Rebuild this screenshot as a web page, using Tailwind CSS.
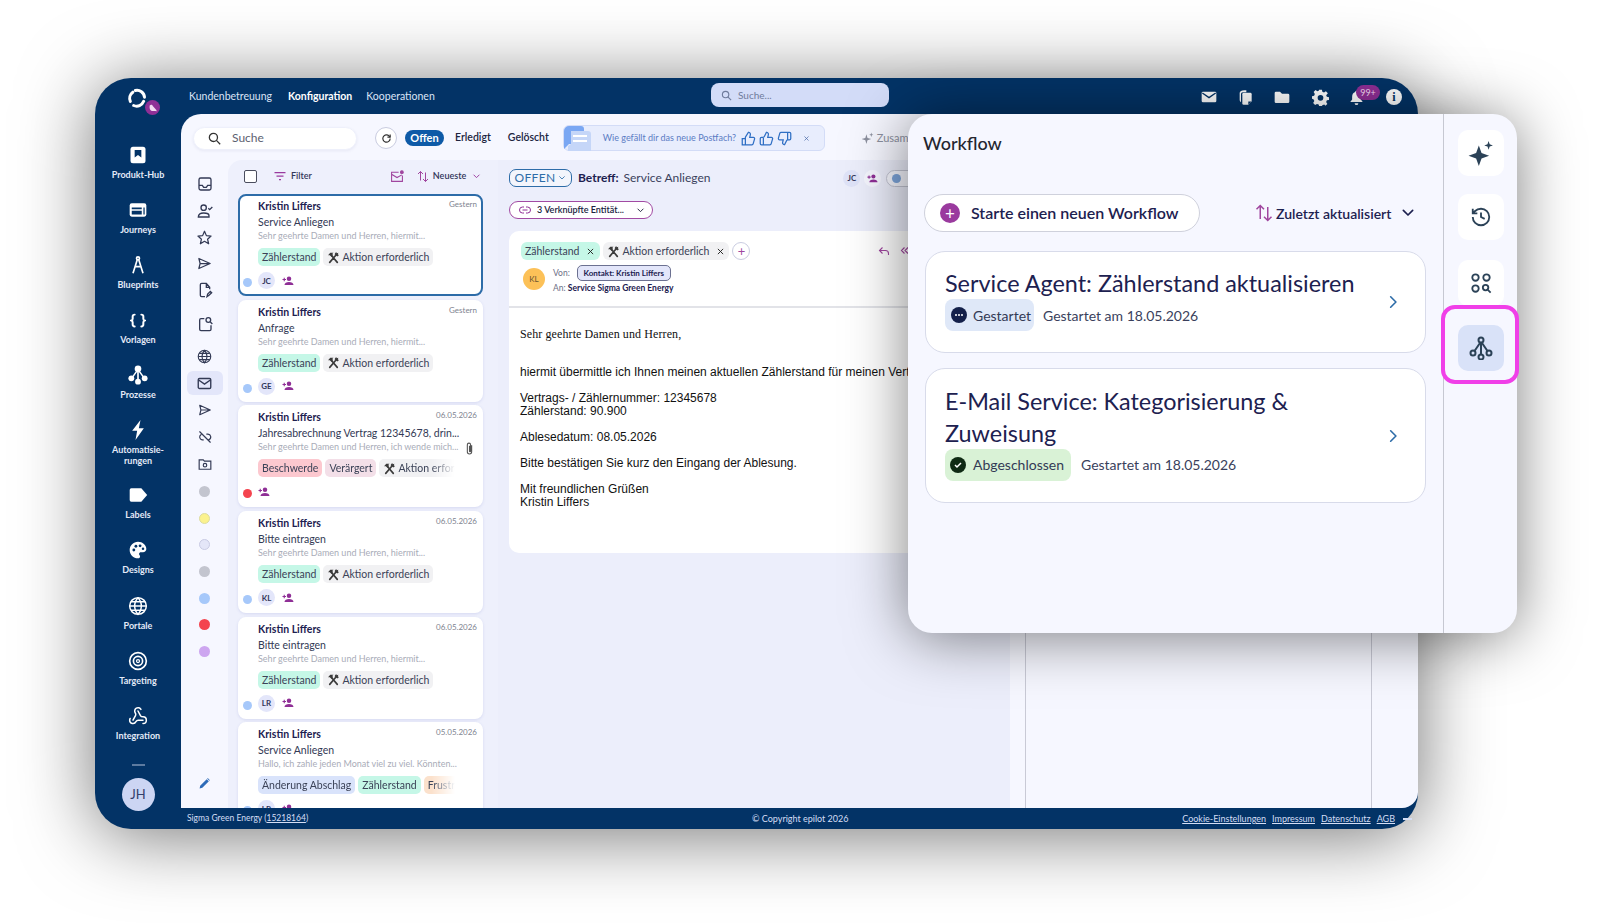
<!DOCTYPE html>
<html lang="de">
<head>
  <meta charset="UTF-8">
  <meta name="viewport" content="width=device-width, initial-scale=1.0">
  <title>Postfach Workflow</title>
  <script src="https://cdn.jsdelivr.net/npm/@tailwindcss/browser@4"></script>
</head>
<body class="h-[923px] w-[1600px] bg-white font-['Lato','Liberation_Sans',sans-serif]">
  <svg class="hidden">
    <defs>
      <symbol id="tools" viewBox="0 0 24 24"><path d="M5 21 17 7M19 21 7 7" fill="none" stroke="currentColor" stroke-width="3" stroke-linecap="round"/><path d="M2 8 6 3h6l-2 2 1 3-3 3-2-3zM15 4l2-2 1 2 3-1-1 3 2 2-3 2-5-4z" fill="currentColor"/></symbol>
      <symbol id="person-add" viewBox="0 0 24 24"><circle cx="14" cy="7.500" r="4.500" fill="currentColor"/><path d="M5 20c0-4 4-6 9-6s9 2 9 6z" fill="currentColor"/><path d="M1 9h7M4.500 5.500v7" stroke="currentColor" stroke-width="2.200"/></symbol>
      <symbol id="close" viewBox="0 0 24 24"><path d="M5 5l14 14M19 5 5 19" fill="none" stroke="currentColor" stroke-width="2.500"/></symbol>
      <symbol id="chev-down" viewBox="0 0 24 24"><path d="M5 8l7 7 7-7" fill="none" stroke="currentColor" stroke-width="2.500" stroke-linecap="round" stroke-linejoin="round"/></symbol>
      <symbol id="chev-right" viewBox="0 0 24 24"><path d="M8 3l9 9-9 9" fill="none" stroke="currentColor" stroke-width="2.800" stroke-linecap="round" stroke-linejoin="round"/></symbol>
      <symbol id="sort" viewBox="0 0 24 24"><path d="M8 21V3M3 8l5-5 5 5" fill="none" stroke="currentColor" stroke-width="2" transform="translate(-1 -1)"/><path d="M16 3v18M11 16l5 5 5-5" fill="none" stroke="currentColor" stroke-width="2" transform="translate(1 1)"/></symbol>
      <symbol id="globe" viewBox="0 0 24 24"><g fill="none" stroke="currentColor" stroke-width="1.800"><circle cx="12" cy="12" r="10"/><path d="M12 2a14.500 14.500 0 0 0 0 20 14.500 14.500 0 0 0 0-20M2 12h20M3.500 7h17M3.500 17h17"/></g></symbol>
      <symbol id="send" viewBox="0 0 24 24"><path d="M3 4l18 8-18 8 2-8zM5 12h16" fill="none" stroke="currentColor" stroke-width="2" stroke-linejoin="round"/></symbol>
      <symbol id="tree" viewBox="0 0 24 24"><g fill="none" stroke="currentColor" stroke-width="2"><circle cx="12" cy="4" r="2.500"/><circle cx="4" cy="17" r="2.500"/><circle cx="12" cy="21" r="2.500"/><circle cx="20" cy="17" r="2.500"/><path d="M12 6.500v12M11 7l-5.500 8M13 7l5.500 8"/></g></symbol>
    </defs>
  </svg>

  <div class="pl-[95px] pt-[78px]">
    <div class="relative flex h-[751px] w-[1323px] rounded-[36px] bg-[#033366] shadow-[0_6px_75px_rgba(0,0,0,0.55)]">

      <!-- sidebar -->
      <aside class="flex w-[86px] flex-col items-center text-[#e4eaf8]">
        <div class="relative h-[67px] w-full">
          <svg class="absolute left-[32px] top-[10px] h-[20px] w-[20px]" viewBox="0 0 24 24" fill="none" stroke="white" stroke-width="3.600" stroke-linecap="round"><path d="M4 16a9 9 0 0 1 3-11"/><path d="M10 3a9 9 0 0 1 11 8"/><path d="M20 16a9 9 0 0 1-12 5"/></svg>
          <div class="absolute left-[50px] top-[22px] flex h-[15px] w-[15px] items-center justify-center rounded-full bg-[#8f2f96]">
            <svg class="h-[10px] w-[10px]" viewBox="0 0 24 24" fill="#f3d9f2"><path d="M4 6c3-3 7-2 8 2l8 9 1 3-4-1H9c-4-1-6-6-5-13z"/></svg>
          </div>
        </div>
        <div class="flex h-[55px] flex-col items-center">
          <svg class="h-[20px] w-[20px]" viewBox="0 0 24 24"><rect x="3" y="2" width="18" height="20" rx="3" fill="white"/><path d="M8 6h8v9l-4-3-4 3z" fill="#033366"/></svg>
          <span class="mt-[4px] text-[9px] font-bold leading-[11px]">Produkt-Hub</span>
        </div>
        <div class="flex h-[55px] flex-col items-center">
          <svg class="h-[20px] w-[20px]" viewBox="0 0 24 24"><rect x="2" y="4" width="20" height="16" rx="2.500" fill="white"/><path d="M4.500 9h12v2h-12zM4.500 13h12v4.500h-12zM18.500 9h1.500v8.500h-1.500z" fill="#033366"/></svg>
          <span class="mt-[4px] text-[9px] font-bold leading-[11px]">Journeys</span>
        </div>
        <div class="flex h-[55px] flex-col items-center">
          <svg class="h-[20px] w-[20px]" viewBox="0 0 24 24" fill="none" stroke="white" stroke-width="2"><circle cx="12" cy="4" r="1.800"/><path d="M11 6 6 22M13 6l5 16M8 14h8"/></svg>
          <span class="mt-[4px] text-[9px] font-bold leading-[11px]">Blueprints</span>
        </div>
        <div class="flex h-[55px] flex-col items-center">
          <svg class="my-[2.500px] h-[15px] w-[16px]" viewBox="0 0 24 24" fill="none" stroke="white" stroke-width="3" stroke-linecap="round" preserveAspectRatio="none"><path d="M7 2.500c-2.500 0-3 1-3 3v3.500c0 1.500-.5 2.500-2 3 1.500.5 2 1.500 2 3v3.500c0 2 .5 3 3 3M17 2.500c2.500 0 3 1 3 3v3.500c0 1.500.5 2.500 2 3-1.500.5-2 1.500-2 3v3.500c0 2-.5 3-3 3"/></svg>
          <span class="mt-[4px] text-[9px] font-bold leading-[11px]">Vorlagen</span>
        </div>
        <div class="flex h-[55px] flex-col items-center">
          <svg class="h-[20px] w-[20px]" viewBox="0 0 24 24" fill="white"><circle cx="12" cy="4.500" r="4"/><circle cx="4" cy="16" r="3.500"/><circle cx="12" cy="20" r="3.500"/><circle cx="20" cy="16" r="3.500"/><path d="M11 6h2v12h-2zM10.500 6l1.500 1-6.500 9-1.500-1zM13.500 6l-1.500 1 6.500 9 1.500-1z"/></svg>
          <span class="mt-[4px] text-[9px] font-bold leading-[11px]">Prozesse</span>
        </div>
        <div class="flex h-[65px] flex-col items-center">
          <svg class="h-[20px] w-[20px]" viewBox="0 0 24 24" fill="white"><path d="M15 0 5 13h6l-2 11 10-14h-6z"/></svg>
          <span class="mt-[4px] text-center text-[9px] font-bold leading-[11px]">Automatisie-<br>rungen</span>
        </div>
        <div class="flex h-[55px] flex-col items-center">
          <svg class="h-[20px] w-[20px]" viewBox="0 0 24 24" fill="white"><path d="M2 6a2 2 0 0 1 2-2h12l7 8-7 8H4a2 2 0 0 1-2-2z"/></svg>
          <span class="mt-[4px] text-[9px] font-bold leading-[11px]">Labels</span>
        </div>
        <div class="flex h-[56px] flex-col items-center">
          <svg class="h-[20px] w-[20px]" viewBox="0 0 24 24"><path d="M12 2C6.500 2 2 6.500 2 12s4.500 10 10 10c1.700 0 2.500-1.200 2.500-2.300 0-.6-.3-1.100-.6-1.500-.3-.4-.6-.8-.6-1.400 0-1.200 1-2 2.200-2H18c2.200 0 4-1.800 4-4 0-4.900-4.500-8.800-10-8.800z" fill="white"/><g fill="#033366"><circle cx="7" cy="12" r="1.700"/><circle cx="9.500" cy="7.500" r="1.700"/><circle cx="14.500" cy="7" r="1.700"/><circle cx="18" cy="10.500" r="1.500"/></g></svg>
          <span class="mt-[4px] text-[9px] font-bold leading-[11px]">Designs</span>
        </div>
        <div class="flex h-[55px] flex-col items-center text-white">
          <svg class="h-[20px] w-[20px]"><use href="#globe"/></svg>
          <span class="mt-[4px] text-[9px] font-bold leading-[11px] text-[#e4eaf8]">Portale</span>
        </div>
        <div class="flex h-[55px] flex-col items-center">
          <svg class="h-[20px] w-[20px]" viewBox="0 0 24 24" fill="none" stroke="white"><circle cx="12" cy="12" r="10" stroke-width="2"/><circle cx="12" cy="12" r="5.500" stroke-width="2"/><circle cx="12" cy="12" r="1.800" stroke-width="1.500"/></svg>
          <span class="mt-[4px] text-[9px] font-bold leading-[11px]">Targeting</span>
        </div>
        <div class="flex h-[58px] flex-col items-center">
          <svg class="h-[20px] w-[20px]" viewBox="0 0 24 24" fill="none" stroke="white" stroke-width="1.800" stroke-linecap="round"><path d="M18 16.980h-5.990c-1.100 0-1.950.94-2.480 1.900A4 4 0 0 1 2 17c.01-.7.2-1.400.57-2"/><path d="m6 17 3.130-5.780c.53-.97.1-2.180-.5-3.100a4 4 0 1 1 6.890-4.060"/><path d="m12 6 3.130 5.730C15.660 12.700 16.900 13 18 13a4 4 0 0 1 0 8"/></svg>
          <span class="mt-[4px] text-[9px] font-bold leading-[11px]">Integration</span>
        </div>
        <div class="h-[2px] w-[13px] bg-[#5d7ba0]"></div>
        <div class="mt-[12px] flex h-[33px] w-[33px] items-center justify-center rounded-full bg-[#ccd5f3] text-[13px] text-[#33406b]">JH</div>
      </aside>

      <div class="flex min-w-0 flex-1 flex-col">
        <!-- top bar -->
        <header class="relative flex h-[36px] items-center pl-[8px] pt-[2px] text-[10.500px] text-[#dbe4f6]">
          <span>Kundenbetreuung</span>
          <span class="ml-[16px] font-bold text-white">Konfiguration</span>
          <span class="ml-[14px]">Kooperationen</span>
          <div class="absolute left-[530px] top-[5px] flex h-[24px] w-[178px] items-center rounded-[8px] bg-[#d3dcf8] pl-[10px] text-[#6f7b9c]">
            <svg class="h-[11px] w-[11px]" viewBox="0 0 24 24" fill="none" stroke="currentColor" stroke-width="2.500"><circle cx="10" cy="10" r="7"/><path d="m15 15 7 7"/></svg>
            <span class="ml-[6px] text-[10px]">Suche...</span>
          </div>
          <div class="ml-auto flex items-center pr-[16px] text-white">
            <svg class="h-[16px] w-[16px]" viewBox="0 0 24 24"><rect x="1" y="4" width="22" height="16" rx="2" fill="white"/><path d="m2 6 10 7 10-7" fill="none" stroke="#033366" stroke-width="2"/></svg>
            <svg class="ml-[20px] h-[17px] w-[16px]" viewBox="0 0 24 24"><path d="M4 5c0-2 3-4 7-4h3v3H9c-2 0-3 1-3 3v12C4 18 4 16 4 15z" fill="white"/><path d="M8 7a2 2 0 0 1 2-2h10a2 2 0 0 1 2 2v11l-5 5h-7a2 2 0 0 1-2-2z" fill="white"/><path d="M22 18h-5v5" fill="#033366"/></svg>
            <svg class="ml-[21px] h-[16px] w-[16px]" viewBox="0 0 24 24" fill="white"><path d="M1 6a2 2 0 0 1 2-2h6l3 3h9a2 2 0 0 1 2 2v10a2 2 0 0 1-2 2H3a2 2 0 0 1-2-2z"/></svg>
            <svg class="ml-[22px] h-[17px] w-[17px]" viewBox="0 0 24 24"><path d="M10 1h4l.6 3 2.400 1 2.600-1.700 2.800 2.800L20 8.700 21 11l3 .6v3.800L21 16l-1 2.400 1.700 2.600-2.800 2.800L17.300 22l-2.700 1-.6 1h-4l-.6-2L7 21l-2.600 1.700-2.800-2.800L3.300 17 2 14.500l-2-.6v-3.800l3-.6L4 7 2.300 4.300 5 1.500 7.600 3.300 9.500 2.500z" fill="white"/><circle cx="12" cy="12.500" r="4" fill="#033366"/></svg>
            <div class="relative ml-[20px] h-[17px] w-[17px]">
              <svg class="h-[17px] w-[15px]" viewBox="0 0 24 24" fill="white"><path d="M12 1a2 2 0 0 1 2 2c3.500 1 5 4 5 8v4l3 4H2l3-4v-4c0-4 1.500-7 5-8a2 2 0 0 1 2-2zM9 21h6a3 3 0 0 1-6 0z"/></svg>
              <span class="absolute left-[7px] top-[-4px] flex h-[15px] w-[24px] items-center justify-center rounded-full bg-[#8f2f96] text-[9px] leading-none text-[#f5d9f4]">99+</span>
            </div>
            <div class="ml-[20px] flex h-[16px] w-[16px] items-center justify-center rounded-full bg-white font-['Liberation_Serif',serif] text-[12px] font-bold leading-none text-[#033366]">i</div>
          </div>
        </header>

        <!-- content -->
        <main class="flex min-h-0 flex-1 flex-col overflow-hidden rounded-tl-[20px] rounded-br-[16px] bg-[#f6f7ff]">
          <div class="flex h-[46px] shrink-0 items-center pl-[12px] pt-[2px] text-[10.500px] text-[#1d2150]">
            <div class="flex h-[23px] w-[164px] items-center rounded-full border border-[#eef0fb] bg-white pl-[14px] shadow-[0_1px_3px_rgba(60,70,130,0.08)]">
              <svg class="h-[13px] w-[13px] text-[#333]" viewBox="0 0 24 24" fill="none" stroke="currentColor" stroke-width="2.400"><circle cx="10" cy="10" r="7.500"/><path d="m15.500 15.500 7 7"/></svg>
              <span class="ml-[11px] text-[12px] text-[#5c6070]">Suche</span>
            </div>
            <div class="ml-[18px] flex h-[22px] w-[22px] items-center justify-center rounded-full border border-[#c9cce0] bg-white">
              <svg class="h-[11px] w-[11px] text-[#333]" viewBox="0 0 24 24" fill="none" stroke="currentColor" stroke-width="2.600"><path d="M20 12a8 8 0 1 1-2.500-5.800L20 9"/><path d="M20 3v6h-6"/></svg>
            </div>
            <span class="ml-[8px] flex h-[16px] w-[39px] items-center justify-center rounded-full bg-[#0e5aa7] text-[11px] font-bold text-white">Offen</span>
            <span class="ml-[11px] font-semibold text-[#20243f]">Erledigt</span>
            <span class="ml-[17px] font-semibold text-[#20243f]">Gelöscht</span>
            <div class="relative ml-[14px] flex h-[26px] w-[262px] items-center rounded-[6px] border border-[#d3dcf7] bg-[#e8edfd] pl-[39px] text-[9px] text-[#5b7cc4]">
              <svg class="absolute left-0 top-0 h-[25px] w-[27px]" viewBox="0 0 27 25"><path d="M5 0h12a3 3 0 0 1 3 3v15H5l-5 5V5a5 5 0 0 1 5-5z" fill="#7aa7f3"/><path d="M7 5h17a3 3 0 0 1 3 3v17H4V20l3-2z" fill="#c5d6f8"/><path d="M9 10h14M9 15h14" stroke="white" stroke-width="2"/></svg>
              <span>Wie gefällt dir das neue Postfach?</span>
              <div class="ml-[5px] flex items-center gap-[3px] text-[#2f6fc4]">
                <svg class="h-[15px] w-[15px]" viewBox="0 0 24 24" fill="none" stroke="currentColor" stroke-width="2"><path d="M7 10v12M2 12h5v10H2zM15 5.880 14 10h5.830a2 2 0 0 1 1.920 2.560l-2.330 8A2 2 0 0 1 17.500 22H7V10l5-8a3.130 3.130 0 0 1 3 3.880Z"/></svg>
                <svg class="h-[15px] w-[15px]" viewBox="0 0 24 24" fill="none" stroke="currentColor" stroke-width="2"><path d="M7 10v12M15 5.880 14 10h5.830a2 2 0 0 1 1.920 2.560l-2.330 8A2 2 0 0 1 17.500 22H4a2 2 0 0 1-2-2v-8a2 2 0 0 1 2-2h2.760a2 2 0 0 0 1.790-1.110L12 2a3.130 3.130 0 0 1 3 3.880Z"/></svg>
                <svg class="h-[15px] w-[15px]" viewBox="0 0 24 24" fill="none" stroke="currentColor" stroke-width="2"><path d="M17 14V2M9 18.120 10 14H4.170a2 2 0 0 1-1.920-2.560l2.330-8A2 2 0 0 1 6.500 2H20a2 2 0 0 1 2 2v8a2 2 0 0 1-2 2h-2.760a2 2 0 0 0-1.790 1.110L12 22a3.130 3.130 0 0 1-3-3.880Z"/></svg>
              </div>
              <svg class="ml-[11px] h-[7px] w-[7px] text-[#4a6aa8]"><use href="#close"/></svg>
            </div>
            <svg class="ml-[36px] h-[13px] w-[13px] text-[#8b8f9e]" viewBox="0 0 24 24" fill="currentColor"><path d="M10 4l2 7 7 2-7 2-2 7-2-7-7-2 7-2zM19 1l1 3 3 1-3 1-1 3-1-3-3-1 3-1z"/></svg>
            <span class="ml-[3px] text-[11px] text-[#8b8f9e]">Zusam</span>
          </div>

          <div class="flex min-h-0 flex-1">
            <!-- nav column -->
            <nav class="flex w-[47px] shrink-0 flex-col items-center pt-[16px] text-[#333a55]">
              <svg class="h-[16px] w-[16px]" viewBox="0 0 24 24" fill="none" stroke="currentColor" stroke-width="2"><rect x="3" y="3" width="18" height="18" rx="2.500"/><path d="M3 14h5l2 3h4l2-3h5"/></svg>
              <svg class="mt-[11px] h-[16px] w-[16px]" viewBox="0 0 24 24" fill="none" stroke="currentColor" stroke-width="2"><circle cx="10" cy="7" r="4"/><path d="M2 21c0-4 4-6 8-6s8 1 8 4v2zM17 8l2 2 4-4"/></svg>
              <svg class="mt-[11px] h-[15px] w-[15px]" viewBox="0 0 24 24" fill="none" stroke="currentColor" stroke-width="2" stroke-linejoin="round"><path d="m12 2 3 7 7.500.7-5.600 5 1.700 7.300-6.600-3.900L5.400 22l1.700-7.300-5.600-5L9 9z"/></svg>
              <svg class="mt-[11px] h-[15px] w-[15px]"><use href="#send"/></svg>
              <svg class="mt-[11px] h-[16px] w-[16px]" viewBox="0 0 24 24" fill="none" stroke="currentColor" stroke-width="2"><path d="M19 11V8l-5-6H7a2 2 0 0 0-2 2v16a2 2 0 0 0 2 2h5M14 2v6h5M15 22l1-4 4-4 2 2-4 4z"/></svg>
              <svg class="mt-[18px] h-[16px] w-[16px]" viewBox="0 0 24 24" fill="none" stroke="currentColor" stroke-width="2"><path d="M11 4H6a2 2 0 0 0-2 2v14a2 2 0 0 0 2 2h13a2 2 0 0 0 2-2v-6"/><circle cx="17" cy="6" r="3.500"/><path d="m20 9 3 3"/></svg>
              <svg class="mt-[17px] h-[15px] w-[15px]"><use href="#globe"/></svg>
              <div class="mt-[7px] flex h-[24px] w-[36px] shrink-0 items-center justify-center rounded-[6px] bg-[#e3e6fa]">
                <svg class="h-[15px] w-[15px]" viewBox="0 0 24 24" fill="none" stroke="currentColor" stroke-width="2.200"><rect x="2" y="4" width="20" height="16" rx="2"/><path d="m2 6 10 7 10-7"/></svg>
              </div>
              <svg class="mt-[8px] h-[14px] w-[14px]"><use href="#send"/></svg>
              <svg class="mt-[13px] h-[14px] w-[14px]" viewBox="0 0 24 24" fill="none" stroke="currentColor" stroke-width="2" stroke-linecap="round"><path d="M9 17H7A5 5 0 0 1 5 8M15 7h2a5 5 0 0 1 2 9.500M3 3l18 18"/></svg>
              <svg class="mt-[13px] h-[14px] w-[14px]" viewBox="0 0 24 24" fill="none" stroke="currentColor" stroke-width="2"><path d="M2 5h7l2 2h11v14H2z"/><circle cx="12" cy="14" r="3"/></svg>
              <span class="mt-[15px] h-[11px] w-[11px] shrink-0 rounded-full bg-[#c3c5cf]"></span>
              <span class="mt-[15.700px] h-[11px] w-[11px] shrink-0 rounded-full border border-[#dcdca0] bg-[#fbf28e]"></span>
              <span class="mt-[15.700px] h-[11px] w-[11px] shrink-0 rounded-full border border-[#c9cbe4] bg-[#e4e6f8]"></span>
              <span class="mt-[15.700px] h-[11px] w-[11px] shrink-0 rounded-full bg-[#c3c5cf]"></span>
              <span class="mt-[15.700px] h-[11px] w-[11px] shrink-0 rounded-full bg-[#a6c8fa]"></span>
              <span class="mt-[15.700px] h-[11px] w-[11px] shrink-0 rounded-full bg-[#f4444f]"></span>
              <span class="mt-[15.700px] h-[11px] w-[11px] shrink-0 rounded-full bg-[#cda6f0]"></span>
              <svg class="mt-[120px] h-[13px] w-[13px] text-[#2d6bb8]" viewBox="0 0 24 24" fill="currentColor"><path d="M3 21l1-5L16 4l4 4L8 20zM18 2l4 4-1 1-4-4z"/></svg>
            </nav>

            <!-- list column -->
            <section class="w-[270px] shrink-0 overflow-hidden rounded-tl-[14px] bg-[#eef0fc] pl-[10px]">
              <div class="flex h-[34px] w-[245px] items-center pb-[2px] text-[9px] font-semibold text-[#33375a]">
                <span class="ml-[6px] h-[13px] w-[13px] rounded-[2px] border-[1.500px] border-[#4a4d5e] bg-white"></span>
                <svg class="ml-[17px] h-[10px] w-[12px] text-[#9a3a9e]" viewBox="0 0 24 20" fill="none" stroke="currentColor" stroke-width="2.500"><path d="M1 3h22M5 10h14M10 17h4"/></svg>
                <span class="ml-[5px]">Filter</span>
                <svg class="ml-[78px] h-[13px] w-[14px] text-[#a0469f]" viewBox="0 0 24 24" fill="none" stroke="currentColor" stroke-width="2"><path d="M15 4H2v17h20V10M2 8l10 6 9-5"/><circle cx="21" cy="4" r="2.500" fill="currentColor"/></svg>
                <svg class="ml-[13px] h-[13px] w-[12px] text-[#a0469f]"><use href="#sort"/></svg>
                <span class="ml-[4px]">Neueste</span>
                <svg class="ml-[6px] h-[9px] w-[9px] text-[#9a3a9e]"><use href="#chev-down"/></svg>
              </div>
              <div class="flex w-[245px] flex-col gap-[3.700px]">

                <article class="relative h-[102px] shrink-0 rounded-[8px] border-2 border-[#2d6ca8] bg-white pl-[18px] pt-[3px] text-[#333a55]">
                  <span class="absolute right-[4px] top-[2px] text-[8px] text-[#80838f]">Gestern</span>
                  <p class="h-[14px] text-[10.500px] font-bold leading-[14px] text-[#1d2150]">Kristin Liffers</p>
                  <p class="mt-[2px] h-[14px] text-[10.500px] leading-[14px]">Service Anliegen</p>
                  <p class="mt-[1px] h-[12px] text-[9px] leading-[12px] text-[#a9acb8]">Sehr geehrte Damen und Herren, hiermit...</p>
                  <div class="mt-[6px] flex h-[18px] gap-[3px] text-[10.500px] leading-[18px]">
                    <span class="rounded-[5px] bg-[#c5f7e7] px-[4px] text-[#3b4257]">Zählerstand</span>
                    <span class="flex items-center rounded-[5px] bg-[#f1f1f3] px-[4px] text-[#3b4257]"><svg class="mr-[2px] h-[13px] w-[13px] text-[#3a3a3a]"><use href="#tools"/></svg>Aktion erforderlich</span>
                  </div>
                  <div class="mt-[6px] flex items-center">
                    <span class="flex h-[17px] w-[17px] items-center justify-center rounded-full bg-[#e3e6fa] text-[8px] font-bold text-[#33375a]">JC</span>
                    <svg class="ml-[7px] h-[12px] w-[12px] text-[#8f2f96]"><use href="#person-add"/></svg>
                  </div>
                  <span class="absolute left-[3px] top-[82px] h-[9px] w-[9px] rounded-full bg-[#a6c8fa]"></span>
                </article>

                <article class="relative h-[102px] shrink-0 rounded-[8px] border-2 border-white bg-white pl-[18px] pt-[3px] text-[#333a55] shadow-[0_1px_3px_rgba(80,90,180,0.15)]">
                  <span class="absolute right-[4px] top-[2px] text-[8px] text-[#80838f]">Gestern</span>
                  <p class="h-[14px] text-[10.500px] font-bold leading-[14px] text-[#1d2150]">Kristin Liffers</p>
                  <p class="mt-[2px] h-[14px] text-[10.500px] leading-[14px]">Anfrage</p>
                  <p class="mt-[1px] h-[12px] text-[9px] leading-[12px] text-[#a9acb8]">Sehr geehrte Damen und Herren, hiermit...</p>
                  <div class="mt-[6px] flex h-[18px] gap-[3px] text-[10.500px] leading-[18px]">
                    <span class="rounded-[5px] bg-[#c5f7e7] px-[4px] text-[#3b4257]">Zählerstand</span>
                    <span class="flex items-center rounded-[5px] bg-[#f1f1f3] px-[4px] text-[#3b4257]"><svg class="mr-[2px] h-[13px] w-[13px] text-[#3a3a3a]"><use href="#tools"/></svg>Aktion erforderlich</span>
                  </div>
                  <div class="mt-[6px] flex items-center">
                    <span class="flex h-[17px] w-[17px] items-center justify-center rounded-full bg-[#e3e6fa] text-[8px] font-bold text-[#33375a]">GE</span>
                    <svg class="ml-[7px] h-[12px] w-[12px] text-[#8f2f96]"><use href="#person-add"/></svg>
                  </div>
                  <span class="absolute left-[3px] top-[82px] h-[9px] w-[9px] rounded-full bg-[#a6c8fa]"></span>
                </article>

                <article class="relative h-[102px] shrink-0 rounded-[8px] border-2 border-white bg-white pl-[18px] pt-[3px] text-[#333a55] shadow-[0_1px_3px_rgba(80,90,180,0.15)]">
                  <span class="absolute right-[4px] top-[2px] text-[8px] text-[#80838f]">06.05.2026</span>
                  <p class="h-[14px] text-[10.500px] font-bold leading-[14px] text-[#1d2150]">Kristin Liffers</p>
                  <p class="mt-[2px] h-[14px] text-[10.500px] leading-[14px]">Jahresabrechnung Vertrag 12345678, drin...</p>
                  <p class="mt-[1px] h-[12px] text-[9px] leading-[12px] text-[#a9acb8]">Sehr geehrte Damen und Herren, ich wende mich...</p>
                  <svg class="absolute right-[6px] top-[35px] h-[13px] w-[11px] text-[#555]" viewBox="0 0 18 24" fill="none" stroke="currentColor" stroke-width="2"><path d="M13 6v12a4 4 0 0 1-8 0V5a3 3 0 0 1 6 0v12a1 1 0 0 1-2 0V7"/></svg>
                  <div class="mt-[6px] flex h-[18px] w-[197px] gap-[3px] overflow-hidden whitespace-nowrap text-[10.500px] leading-[18px] [mask-image:linear-gradient(to_right,black_88%,transparent)]">
                    <span class="rounded-[5px] bg-[#fcc8cf] px-[4px] text-[#3b4257]">Beschwerde</span>
                    <span class="rounded-[5px] bg-[#f3dfe8] px-[4px] text-[#3b4257]">Verärgert</span>
                    <span class="flex items-center rounded-[5px] bg-[#f1f1f3] px-[4px] text-[#3b4257]"><svg class="mr-[2px] h-[13px] w-[13px] text-[#3a3a3a]"><use href="#tools"/></svg>Aktion erforderlich</span>
                  </div>
                  <div class="mt-[6px] flex h-[17px] items-center">
                    <svg class="h-[12px] w-[12px] text-[#8f2f96]"><use href="#person-add"/></svg>
                  </div>
                  <span class="absolute left-[3px] top-[82px] h-[9px] w-[9px] rounded-full bg-[#f4444f]"></span>
                </article>

                <article class="relative h-[102px] shrink-0 rounded-[8px] border-2 border-white bg-white pl-[18px] pt-[3px] text-[#333a55] shadow-[0_1px_3px_rgba(80,90,180,0.15)]">
                  <span class="absolute right-[4px] top-[2px] text-[8px] text-[#80838f]">06.05.2026</span>
                  <p class="h-[14px] text-[10.500px] font-bold leading-[14px] text-[#1d2150]">Kristin Liffers</p>
                  <p class="mt-[2px] h-[14px] text-[10.500px] leading-[14px]">Bitte eintragen</p>
                  <p class="mt-[1px] h-[12px] text-[9px] leading-[12px] text-[#a9acb8]">Sehr geehrte Damen und Herren,  hiermit...</p>
                  <div class="mt-[6px] flex h-[18px] gap-[3px] text-[10.500px] leading-[18px]">
                    <span class="rounded-[5px] bg-[#c5f7e7] px-[4px] text-[#3b4257]">Zählerstand</span>
                    <span class="flex items-center rounded-[5px] bg-[#f1f1f3] px-[4px] text-[#3b4257]"><svg class="mr-[2px] h-[13px] w-[13px] text-[#3a3a3a]"><use href="#tools"/></svg>Aktion erforderlich</span>
                  </div>
                  <div class="mt-[6px] flex items-center">
                    <span class="flex h-[17px] w-[17px] items-center justify-center rounded-full bg-[#e3e6fa] text-[8px] font-bold text-[#33375a]">KL</span>
                    <svg class="ml-[7px] h-[12px] w-[12px] text-[#8f2f96]"><use href="#person-add"/></svg>
                  </div>
                  <span class="absolute left-[3px] top-[82px] h-[9px] w-[9px] rounded-full bg-[#a6c8fa]"></span>
                </article>

                <article class="relative h-[102px] shrink-0 rounded-[8px] border-2 border-white bg-white pl-[18px] pt-[3px] text-[#333a55] shadow-[0_1px_3px_rgba(80,90,180,0.15)]">
                  <span class="absolute right-[4px] top-[2px] text-[8px] text-[#80838f]">06.05.2026</span>
                  <p class="h-[14px] text-[10.500px] font-bold leading-[14px] text-[#1d2150]">Kristin Liffers</p>
                  <p class="mt-[2px] h-[14px] text-[10.500px] leading-[14px]">Bitte eintragen</p>
                  <p class="mt-[1px] h-[12px] text-[9px] leading-[12px] text-[#a9acb8]">Sehr geehrte Damen und Herren,  hiermit...</p>
                  <div class="mt-[6px] flex h-[18px] gap-[3px] text-[10.500px] leading-[18px]">
                    <span class="rounded-[5px] bg-[#c5f7e7] px-[4px] text-[#3b4257]">Zählerstand</span>
                    <span class="flex items-center rounded-[5px] bg-[#f1f1f3] px-[4px] text-[#3b4257]"><svg class="mr-[2px] h-[13px] w-[13px] text-[#3a3a3a]"><use href="#tools"/></svg>Aktion erforderlich</span>
                  </div>
                  <div class="mt-[6px] flex items-center">
                    <span class="flex h-[17px] w-[17px] items-center justify-center rounded-full bg-[#e3e6fa] text-[8px] font-bold text-[#33375a]">LR</span>
                    <svg class="ml-[7px] h-[12px] w-[12px] text-[#8f2f96]"><use href="#person-add"/></svg>
                  </div>
                  <span class="absolute left-[3px] top-[82px] h-[9px] w-[9px] rounded-full bg-[#a6c8fa]"></span>
                </article>

                <article class="relative h-[102px] shrink-0 rounded-[8px] border-2 border-white bg-white pl-[18px] pt-[3px] text-[#333a55] shadow-[0_1px_3px_rgba(80,90,180,0.15)]">
                  <span class="absolute right-[4px] top-[2px] text-[8px] text-[#80838f]">05.05.2026</span>
                  <p class="h-[14px] text-[10.500px] font-bold leading-[14px] text-[#1d2150]">Kristin Liffers</p>
                  <p class="mt-[2px] h-[14px] text-[10.500px] leading-[14px]">Service Anliegen</p>
                  <p class="mt-[1px] h-[12px] text-[9px] leading-[12px] text-[#a9acb8]">Hallo, ich zahle jeden Monat viel zu viel. Könnten...</p>
                  <div class="mt-[6px] flex h-[18px] w-[197px] gap-[3px] overflow-hidden whitespace-nowrap text-[10.500px] leading-[18px] [mask-image:linear-gradient(to_right,black_88%,transparent)]">
                    <span class="rounded-[5px] bg-[#d9e3fb] px-[4px] text-[#3b4257]">Änderung Abschlag</span>
                    <span class="rounded-[5px] bg-[#c5f7e7] px-[4px] text-[#3b4257]">Zählerstand</span>
                    <span class="rounded-[5px] bg-[#fbe1cc] px-[4px] text-[#3b4257]">Frustriert</span>
                  </div>
                  <div class="mt-[6px] flex items-center">
                    <span class="flex h-[17px] w-[17px] items-center justify-center rounded-full bg-[#e3e6fa] text-[8px] font-bold text-[#33375a]">LR</span>
                    <svg class="ml-[7px] h-[12px] w-[12px] text-[#8f2f96]"><use href="#person-add"/></svg>
                  </div>
                  <span class="absolute left-[3px] top-[82px] h-[9px] w-[9px] rounded-full bg-[#a6c8fa]"></span>
                </article>
              </div>
            </section>

            <!-- mail pane -->
            <section class="w-[512px] shrink-0 bg-[#eceefb] pl-[11px]">
              <div class="mt-[9px] flex h-[18px] items-center">
                <span class="flex h-[18px] w-[63px] items-center justify-center rounded-[7px] border border-[#2d6ca8] bg-white/40 text-[12px] tracking-[0.3px] text-[#2d6ca8]">OFFEN<svg class="ml-[3px] h-[8px] w-[8px]"><use href="#chev-down"/></svg></span>
                <span class="ml-[6px] text-[12px] font-bold text-[#1d2150]">Betreff:</span>
                <span class="ml-[5px] text-[12px] text-[#3a3f5c]">Service Anliegen</span>
                <span class="ml-[133px] flex h-[17px] w-[17px] items-center justify-center rounded-full bg-[#dfe3f8] text-[8px] font-bold text-[#33375a]">JC</span>
                <span class="ml-[4px] flex h-[17px] w-[17px] items-center justify-center rounded-full bg-[#f6f7ff]"><svg class="h-[11px] w-[11px] text-[#8f2f96]"><use href="#person-add"/></svg></span>
                <span class="ml-[5px] flex h-[17px] w-[40px] items-center rounded-full border border-[#c4c6d4] bg-[#f6f7ff] pl-[5px]"><span class="h-[9px] w-[9px] rounded-full bg-[#7ea6dc]"></span></span>
              </div>
              <div class="mt-[14px] flex h-[18px] w-[144px] items-center rounded-full border border-[#a14aa3] bg-white pl-[9px] text-[9px] font-semibold text-[#20243f]">
                <svg class="h-[10px] w-[12px] text-[#8f2f96]" viewBox="0 0 24 20" fill="none" stroke="currentColor" stroke-width="2"><path d="M10 4H7a6 6 0 0 0 0 12h3M14 4h3a6 6 0 0 1 0 12h-3M7 10h10"/></svg>
                <span class="ml-[6px]">3 Verknüpfte Entität...</span>
                <svg class="ml-[12px] h-[9px] w-[9px]"><use href="#chev-down"/></svg>
              </div>
              <div class="mt-[12px] h-[322px] w-[491px] rounded-[10px] bg-white">
                <div class="h-[77px] border-b-2 border-[#e2e3e8] pl-[12px] pt-[11px]">
                  <div class="flex h-[18px] items-center text-[10.500px] leading-[18px] text-[#3b4257]">
                    <span class="flex items-center rounded-[6px] bg-[#c5f7e7] pl-[4px] pr-[5px]">Zählerstand<svg class="ml-[7px] h-[9px] w-[9px] text-[#222]"><use href="#close"/></svg></span>
                    <span class="ml-[3px] flex items-center rounded-[6px] bg-[#f1f1f3] pl-[4px] pr-[4px]"><svg class="mr-[2px] h-[13px] w-[13px] text-[#3a3a3a]"><use href="#tools"/></svg>Aktion erforderlich<svg class="ml-[7px] h-[9px] w-[9px] text-[#222]"><use href="#close"/></svg></span>
                    <span class="ml-[3px] flex h-[18px] w-[18px] items-center justify-center rounded-full border border-[#c9cce0] text-[13px] text-[#a0469f]">+</span>
                    <svg class="ml-[128px] h-[12px] w-[12px] text-[#a0469f]" viewBox="0 0 24 24" fill="none" stroke="currentColor" stroke-width="2.200"><path d="M9 5 3 11l6 6M3 11h12a6 6 0 0 1 6 6v3"/></svg>
                    <svg class="ml-[10px] h-[12px] w-[12px] text-[#a0469f]" viewBox="0 0 24 24" fill="none" stroke="currentColor" stroke-width="2.200"><path d="M9 5 3 11l6 6M16 5l-6 6 6 6"/></svg>
                  </div>
                  <div class="mt-[5px] flex">
                    <span class="ml-[2px] mt-[3px] flex h-[22px] w-[22px] items-center justify-center rounded-full bg-[#fcc158] text-[8px] text-[#6a5530]">KL</span>
                    <div class="ml-[8px] text-[8.500px] text-[#6c7086]">
                      <div class="flex h-[16px] items-center">Von:<span class="ml-[7px] flex h-[16px] w-[94px] items-center justify-center rounded-[5px] border border-[#6c7191] bg-[#e3e6fa] text-[8px] font-bold text-[#1d2150]">Kontakt: Kristin Liffers</span></div>
                      <div class="mt-[1px]">An: <span class="font-bold text-[#1d2150]">Service Sigma Green Energy</span></div>
                    </div>
                  </div>
                </div>
                <div class="pl-[11px] pt-[20px] font-['Liberation_Sans',sans-serif] text-[12px] leading-[13px] text-[#111]">
                  <p class="font-['Liberation_Serif',serif] font-medium tracking-[0.1px]">Sehr geehrte Damen und Herren,</p>
                  <p class="mt-[25px] whitespace-nowrap">hiermit übermittle ich Ihnen meinen aktuellen Zählerstand für meinen Vertrag</p>
                  <p class="mt-[13px]">Vertrags- / Zählernummer: 12345678</p>
                  <p>Zählerstand: 90.900</p>
                  <p class="mt-[13px]">Ablesedatum: 08.05.2026</p>
                  <p class="mt-[13px]">Bitte bestätigen Sie kurz den Eingang der Ablesung.</p>
                  <p class="mt-[13px]">Mit freundlichen Grüßen</p>
                  <p>Kristin Liffers</p>
                </div>
              </div>
            </section>

            <div class="w-[15px] shrink-0"></div>
            <div class="w-[347px] shrink-0 border-x border-[#c9cad6]"></div>
          </div>
        </main>

        <!-- footer -->
        <footer class="relative flex h-[21px] items-center justify-between pl-[6px] pr-[23px] text-[9px] text-[#d5def5]">
          <span class="text-[8.500px]">Sigma Green Energy (<span class="underline">15218164</span>)</span>
          <span class="absolute left-[571px]">© Copyright epilot 2026</span>
          <div class="flex gap-[6px] underline">
            <span>Cookie-Einstellungen</span>
            <span>Impressum</span>
            <span>Datenschutz</span>
            <span>AGB</span>
          </div>
          <span class="absolute right-[6px] top-[10px] h-[2px] w-[9px] bg-[#d5def5]"></span>
        </footer>
      </div>

      <!-- workflow panel -->
      <div class="absolute left-[813px] top-[36px] flex h-[519px] w-[609px] rounded-[24px] bg-[#f6f7ff] shadow-[0_4px_60px_rgba(0,0,0,0.5)]">
        <div class="w-[535px] shrink-0 pl-[15px]">
          <h2 class="pt-[18px] text-[18px] font-medium leading-[22px] text-[#24262f]">Workflow</h2>
          <div class="mt-[40px] flex h-[38px] items-center">
            <div class="ml-[1px] flex h-[38px] w-[276px] items-center rounded-full border border-[#cfd1dc] bg-white pl-[15px] text-[16px] font-semibold text-[#1d2150]">
              <span class="flex h-[20px] w-[20px] items-center justify-center rounded-full bg-[#9a3a9e] text-[17px] font-normal leading-none text-white">+</span>
              <span class="ml-[11px]">Starte einen neuen Workflow</span>
            </div>
            <svg class="ml-[55px] h-[22px] w-[18px] text-[#a0469f]"><use href="#sort"/></svg>
            <span class="ml-[3px] text-[14px] font-semibold text-[#1d2150]">Zuletzt aktualisiert</span>
            <svg class="ml-[9px] h-[16px] w-[16px] text-[#1d2150]"><use href="#chev-down"/></svg>
          </div>
          <div class="ml-[2px] mt-[19px] flex h-[102px] w-[501px] items-center rounded-[20px] border border-[#d8dbea] bg-white pb-[6px] pl-[19px]">
            <div class="w-[440px]">
              <p class="text-[23.400px] leading-[32px] text-[#1d2150]">Service Agent: Zählerstand aktualisieren</p>
              <div class="flex items-center">
                <span class="flex h-[32px] w-[89px] items-center rounded-[8px] bg-[#dfe8f8] pl-[6px] text-[14px] text-[#333a55]">
                  <span class="flex h-[16px] w-[16px] items-center justify-center rounded-full bg-[#14204a]"><svg class="h-[10px] w-[10px]" viewBox="0 0 20 20" fill="white"><circle cx="4" cy="10" r="2"/><circle cx="10" cy="10" r="2"/><circle cx="16" cy="10" r="2"/></svg></span>
                  <span class="ml-[6px]">Gestartet</span>
                </span>
                <span class="ml-[9px] text-[14px] text-[#3a3f5c]">Gestartet am 18.05.2026</span>
              </div>
            </div>
            <svg class="ml-[1px] mt-[6px] h-[14px] w-[14px] text-[#2d6ca8]"><use href="#chev-right"/></svg>
          </div>
          <div class="ml-[2px] mt-[15px] flex h-[135px] w-[501px] items-center rounded-[20px] border border-[#d8dbea] bg-white pb-[6px] pl-[19px]">
            <div class="w-[440px]">
              <p class="w-[400px] text-[23.400px] leading-[32px] text-[#1d2150]">E-Mail Service: Kategorisierung &amp; Zuweisung</p>
              <div class="flex items-center">
                <span class="flex h-[32px] w-[126px] items-center rounded-[8px] bg-[#d9f2d6] pl-[5px] text-[14px] text-[#333a55]">
                  <span class="flex h-[16px] w-[16px] items-center justify-center rounded-full bg-[#0f2a14]"><svg class="h-[10px] w-[10px]" viewBox="0 0 20 20" fill="none" stroke="white" stroke-width="3"><path d="M4 10l4 4 8-8"/></svg></span>
                  <span class="ml-[7px]">Abgeschlossen</span>
                </span>
                <span class="ml-[10px] text-[14px] text-[#3a3f5c]">Gestartet am 18.05.2026</span>
              </div>
            </div>
            <svg class="ml-[1px] mt-[6px] h-[14px] w-[14px] text-[#2d6ca8]"><use href="#chev-right"/></svg>
          </div>
        </div>
        <div class="relative flex-1 border-l border-[#c6c8d2] pl-[14px] pt-[16px] text-[#2b4257]">
          <div class="flex h-[46px] w-[46px] items-center justify-center rounded-[10px] bg-white">
            <svg class="h-[26px] w-[26px]" viewBox="0 0 24 24" fill="currentColor"><path d="M10 5l2.500 7 7 2.500-7 2.500L10 24l-2.500-7-7-2.500 7-2.500zM19 1l1 3 3 1-3 1-1 3-1-3-3-1 3-1z"/></svg>
          </div>
          <div class="mt-[18px] flex h-[46px] w-[46px] items-center justify-center rounded-[10px] bg-white">
            <svg class="h-[22px] w-[22px]" viewBox="0 0 24 24" fill="none" stroke="currentColor" stroke-width="2"><path d="M3 12a9 9 0 1 0 9-9 9.750 9.750 0 0 0-6.740 2.740L3 8M3 3v5h5M12 7v5l4 2"/></svg>
          </div>
          <div class="mt-[20px] flex h-[46px] w-[46px] items-center justify-center rounded-[10px] bg-white">
            <svg class="h-[22px] w-[22px]" viewBox="0 0 24 24" fill="none" stroke="currentColor" stroke-width="2"><circle cx="6" cy="6" r="3.500"/><circle cx="18" cy="6" r="3.500"/><circle cx="6" cy="18" r="3.500"/><circle cx="17" cy="17" r="3"/><path d="m19.500 19.500 3 3"/></svg>
          </div>
          <div class="mt-[19px] flex h-[46px] w-[46px] items-center justify-center rounded-[10px] bg-[#d9e2f8]">
            <svg class="h-[24px] w-[24px]"><use href="#tree"/></svg>
          </div>
          <div class="absolute left-[-3px] top-[191px] h-[79px] w-[78px] rounded-[14px] border-[4px] border-[#f03fe8]"></div>
        </div>
      </div>
    </div>
  </div>
</body>
</html>
